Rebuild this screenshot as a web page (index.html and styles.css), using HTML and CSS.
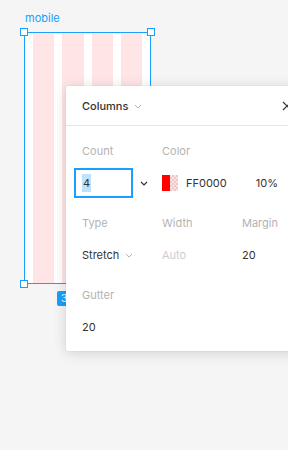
FILE: index.html
```html
<!DOCTYPE html>
<html lang="en">
<head>
    <meta charset="UTF-8">
    <meta name="viewport" content="width=device-width, initial-scale=1.0">
    <link rel="stylesheet" href="styles.css">
</head>
<body>
    <div class="canvas">
        <div class="frame-name">mobile</div>
        <div class="frame">
            <div class="col"></div>
            <div class="col"></div>
            <div class="col"></div>
            <div class="col"></div>
            <span class="handle handle-tl"></span>
            <span class="handle handle-tr"></span>
            <span class="handle handle-bl"></span>
            <span class="handle handle-br"></span>
            <div class="size-badge">375</div>
        </div>

        <div class="panel">
            <div class="panel-head">
                <div class="panel-title">Columns
                    <svg class="chev" width="8" height="5" viewBox="0 0 8 5"><path d="M1 1l3 3 3-3" fill="none" stroke="#b3b3b3" stroke-width="1"/></svg>
                </div>
                <svg class="close" width="10" height="10" viewBox="0 0 10 10"><path d="M1 1l8 8M9 1l-8 8" fill="none" stroke="#333" stroke-width="1.2"/></svg>
            </div>
            <div class="panel-body">
                <div class="field-row">
                    <div class="label">Count</div>
                    <div class="label">Color</div>
                    <div></div>
                </div>
                <div class="field-row">
                    <div class="count">
                        <div class="count-input"><span class="sel">4</span></div>
                        <svg class="count-chev" width="8" height="5" viewBox="0 0 8 5"><path d="M1 1l3 3 3-3" fill="none" stroke="#333" stroke-width="1.2"/></svg>
                    </div>
                    <div class="color">
                        <span class="swatch"><span class="swatch-solid"></span><span class="swatch-alpha"></span></span>
                        <span class="value">FF0000</span>
                        <span class="value pct">10%</span>
                    </div>
                </div>

                <div class="field-row gap-top">
                    <div class="label">Type</div>
                    <div class="label">Width</div>
                    <div class="label">Margin</div>
                </div>
                <div class="field-row">
                    <div class="value">Stretch
                        <svg class="chev" width="8" height="5" viewBox="0 0 8 5"><path d="M1 1l3 3 3-3" fill="none" stroke="#b3b3b3" stroke-width="1"/></svg>
                    </div>
                    <div class="value muted">Auto</div>
                    <div class="value">20</div>
                </div>

                <div class="field-row gap-top">
                    <div class="label">Gutter</div>
                </div>
                <div class="field-row">
                    <div class="value">20</div>
                </div>
            </div>
        </div>
    </div>
</body>
</html>
```

FILE: styles.css
```css
body {
   margin: 0;
   background: #f5f5f5;
   font-family: Inter, "Noto Sans", sans-serif;
   font-size: 11px;
   color: #333;
   overflow: hidden;
}
.canvas {
   position: relative;
   width: 288px;
   height: 450px;
}
.frame-name {
   position: absolute;
   left: 25px;
   top: 11px;
   color: #18a0fb;
   font-size: 11px;
}
.frame {
   position: absolute;
   left: 24px;
   top: 32px;
   width: 127px;
   height: 252px;
   border: 1px solid #18a0fb;
   background: #fff;
   display: flex;
   gap: 8px;
   padding: 0 8px;
   box-sizing: border-box;
}
.frame .col {
   flex: 1;
   background: rgba(255, 0, 0, 0.1);
}
.handle {
   position: absolute;
   width: 6px;
   height: 6px;
   background: #fff;
   border: 1px solid #18a0fb;
}
.handle-tl { left: -5px; top: -5px; }
.handle-tr { right: -5px; top: -5px; }
.handle-bl { left: -5px; bottom: -5px; }
.handle-br { right: -5px; bottom: -5px; }
.size-badge {
   position: absolute;
   left: 32px;
   top: 258px;
   height: 15px;
   line-height: 15px;
   padding: 0 12px 0 4px;
   background: #18a0fb;
   color: #fff;
   border-radius: 2px;
   font-size: 10px;
}
.panel {
   position: absolute;
   left: 66px;
   top: 86px;
   width: 240px;
   height: 265px;
   background: #fff;
   border-radius: 2px;
   box-shadow: 0 2px 14px rgba(0, 0, 0, 0.15), 0 0 0 0.5px rgba(0, 0, 0, 0.05);
}
.panel-head {
   height: 40px;
   border-bottom: 1px solid #e5e5e5;
   display: flex;
   align-items: center;
   justify-content: space-between;
   padding: 1px 18px 0 16px;
   box-sizing: border-box;
}
.panel-title {
   font-weight: 500;
   color: #333;
   display: flex;
   align-items: center;
   gap: 6px;
}
.close {
   margin-right: -4px;
}
.panel-body {
   padding: 9px 0 0 16px;
}
.field-row {
   display: grid;
   grid-template-columns: 80px 80px 80px;
   height: 32px;
   align-items: center;
}
.gap-top {
   margin-top: 8px;
}
.label {
   color: #b3b3b3;
}
.value {
   color: #333;
   display: flex;
   align-items: center;
   gap: 6px;
}
.muted {
   color: #ccc;
}
.count {
   display: flex;
   align-items: center;
   margin-left: -8px;
}
.count-input {
   width: 48px;
   height: 26px;
   border: 2px solid #18a0fb;
   display: flex;
   align-items: center;
   padding-left: 7px;
   box-sizing: content-box;
}
.sel {
   background: #bde3fe;
   padding: 2px 1px;
   margin-left: -1px;
}
.count-chev {
   margin-left: 7px;
}
.color {
   grid-column: 2 / 4;
   width: 116px;
   display: flex;
   align-items: center;
}
.swatch {
   display: flex;
   width: 16px;
   height: 16px;
   margin-right: 8px;
}
.swatch-solid {
   width: 8px;
   background: #ff0000;
}
.swatch-alpha {
   width: 8px;
   background:
      linear-gradient(rgba(255, 0, 0, 0.12), rgba(255, 0, 0, 0.12)),
      conic-gradient(#e6e6e6 25%, #fff 0 50%, #e6e6e6 0 75%, #fff 0) 0 0 / 4px 4px;
}
.pct {
   margin-left: auto;
}
```
